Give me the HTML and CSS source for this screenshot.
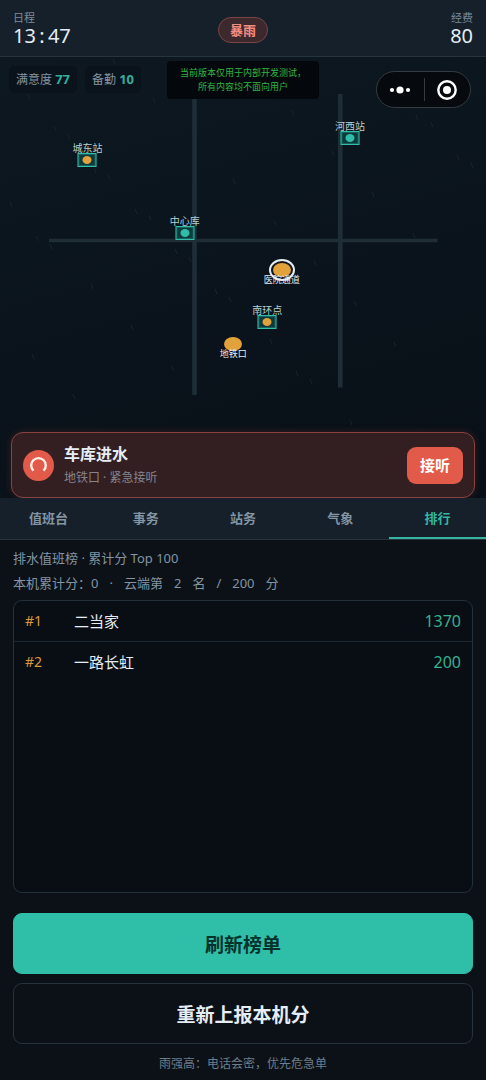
FILE: index.html
```html
<!DOCTYPE html>
<html lang="zh-CN">
<head>
<meta charset="UTF-8">
<meta name="viewport" content="width=device-width, initial-scale=1">
<title>排水值班</title>
<link rel="stylesheet" href="styles.css">
</head>
<body>

    <header class="topbar">
        <div class="stat">
            <span class="stat-label">日程</span>
            <span class="stat-value">13<span class="colon">:</span>47</span>
        </div>
        <span class="weather">暴雨</span>
        <div class="stat stat-right">
            <span class="stat-label">经费</span>
            <span class="stat-value">80</span>
        </div>
    </header>

    <section class="map">
        <svg class="map-bg" viewBox="0 57 486 441" preserveAspectRatio="none" aria-hidden="true">
            <g class="roads">
                <path d="M49 240.5H437.5" stroke-width="3.6"/>
                <path d="M194.5 94V395M340.3 94V387.5" stroke-width="4.6"/>
            </g>
            <!-- 雨滴 -->
            <path class="rain" d="M113 59l2 5M28 94l2 5M153 98l2 5M54 126l2 5M68 134l2 5M94 168l2 5M108 175l2 5M10 202l2 5M135 209l2 5M149 215l2 5M36 236l2 5M50 244l2 5M175 249l2 5M189 257l2 5M233 179l2 5M292 110l2 5M416 115l2 5M431 122l2 5M332 151l2 5M457 155l2 5M471 163l2 5M372 192l2 5M274 220l2 5M413 233l2 5M314 260l2 5M215 289l2 5M229 297l2 5M354 301l2 5M270 339l2 5M394 342l2 5M172 366l2 5M296 371l2 5M310 379l2 5M91 284l2 5M131 325l2 5M32 354l2 5M73 394l2 5M350 420l2 5"/>
        </svg>

        <div class="pin" style="left:18%;top:23.3%"><span class="pin-name">城东站</span><i class="station warn"></i></div>
        <div class="pin" style="left:72%;top:18.4%"><span class="pin-name">河西站</span><i class="station"></i></div>
        <div class="pin" style="left:38%;top:40%"><span class="pin-name">中心库</span><i class="station"></i></div>
        <div class="pin" style="left:55%;top:60%"><span class="pin-name">南环点</span><i class="station warn"></i></div>
        <div class="pin" style="left:58%;top:48.3%"><i class="event selected"></i><span class="event-name">医院通道</span></div>
        <div class="pin" style="left:48%;top:65%"><i class="event"></i><span class="event-name">地铁口</span></div>

        <div class="chips">
            <span class="chip">满意度 <b>77</b></span>
            <span class="chip">备勤 <b>10</b></span>
        </div>

        <p class="notice">当前版本仅用于内部开发测试，<br>所有内容均不面向用户</p>

        <div class="capsule">
            <button class="capsule-btn" aria-label="更多">
                <svg width="22" height="10" viewBox="0 0 22 10" fill="#fff"><circle cx="3" cy="5" r="2.1"/><circle cx="11" cy="5" r="3.6"/><circle cx="19" cy="5" r="2.1"/></svg>
            </button>
            <button class="capsule-btn" aria-label="关闭">
                <svg width="22" height="22" viewBox="0 0 22 22"><circle cx="11" cy="11" r="8.7" fill="none" stroke="#fff" stroke-width="2.4"/><circle cx="11" cy="11" r="4" fill="#fff"/></svg>
            </button>
        </div>

        <div class="alert">
            <svg class="alert-icon" viewBox="0 0 31 31" aria-hidden="true">
                <circle cx="15.5" cy="15.5" r="15.5" fill="#e25a49"/>
                <path d="M10.5 20.7A7.3 7.3 0 1 1 20.5 20.7" fill="none" stroke="#fff1e6" stroke-width="2.4"/>
            </svg>
            <div class="alert-text">
                <strong>车库进水</strong>
                <span>地铁口 · 紧急接听</span>
            </div>
            <button class="alert-btn">接听</button>
        </div>
    </section>

    <nav class="tabs">
        <button class="tab">值班台</button>
        <button class="tab">事务</button>
        <button class="tab">站务</button>
        <button class="tab">气象</button>
        <button class="tab active">排行</button>
    </nav>

    <main class="panel">
        <p class="line">排水值班榜 · 累计分 Top 100</p>
        <p class="line summary"><span>本机累计分：0</span> <span>·</span> <span>云端第</span> <span>2</span> <span>名</span> <span>/</span> <span>200</span> <span>分</span></p>

        <div class="board">
            <table class="rank">
                <tr>
                    <td class="no">#1</td>
                    <td class="name">二当家</td>
                    <td class="score">1370</td>
                </tr>
                <tr>
                    <td class="no">#2</td>
                    <td class="name">一路长虹</td>
                    <td class="score">200</td>
                </tr>
            </table>
        </div>

        <div class="actions">
            <button class="btn primary">刷新榜单</button>
            <button class="btn">重新上报本机分</button>
        </div>
        <p class="tip">雨强高：电话会密，优先危急单</p>
    </main>

</body>
</html>
```
FILE: styles.css
```css
*{
    margin: 0;
    padding: 0;
    box-sizing: border-box;
}

body{
    min-height: 100vh;
    display: flex;
    flex-direction: column;
    background: #0b1117;
    color: #e6edf5;
    font-family: "Noto Sans", "Noto Sans CJK SC", sans-serif;
}

button{
    font-family: inherit;
    border: none;
    background: none;
    color: inherit;
    cursor: pointer;
}

/* 顶栏 */
.topbar{
    height: 57px;
    padding: 0 13px;
    display: flex;
    align-items: center;
    justify-content: space-between;
    background: #15202a;
    border-bottom: 1px solid #26343d;
}

.stat{
    flex: 1;
    display: flex;
    flex-direction: column;
}

.stat-right{
    align-items: flex-end;
}

.stat-label{
    font-size: 11px;
    line-height: 14px;
    color: #7c8b99;
}

.stat-value{
    font-size: 20px;
    line-height: 21px;
}

.colon{
    display: inline-block;
    width: 12px;
    text-align: center;
}

.weather{
    padding: 0 11px;
    border: 1px solid #7d4444;
    border-radius: 13px;
    background: #3c292e;
    color: #f58d80;
    font-size: 13px;
    line-height: 24px;
    font-weight: bold;
    margin-top: 3px;
}

/* 地图 */
.map{
    position: relative;
    min-height: 441px;
    padding: 9px 11px 0 9px;
    display: flex;
    flex-direction: column;
    justify-content: space-between;
    background: linear-gradient(165deg, #0d1821 0%, #0a131b 60%, #080f17 100%);
}

.map-bg{
    position: absolute;
    top: 0;
    left: 0;
    width: 100%;
    height: 100%;
}

.roads{
    stroke: #1f2d37;
}

.rain{
    fill: none;
    stroke: #18242d;
    stroke-width: 1;
}

.pin{
    position: absolute;
    width: 0;
    height: 0;
}

.pin i{
    position: absolute;
    transform: translate(-50%, -50%);
}

.station{
    width: 19px;
    height: 14px;
    border: 1px solid #2fbfa8;
    outline: 1px solid rgba(47, 191, 168, 0.3);
    outline-offset: -2px;
    background: #0f3a3d;
}

.station::after{
    content: "";
    position: absolute;
    top: 2px;
    left: 4px;
    width: 9px;
    height: 8px;
    border-radius: 50%;
    background: #2fbfa8;
}

.station.warn::after{
    background: #e2a23b;
}

.event{
    width: 18px;
    height: 14px;
    border-radius: 50%;
    background: #e2a23b;
}

.event.selected{
    box-shadow: 0 0 0 2px #14171b, 0 0 0 4px #e6edf5;
}

.pin-name,
.event-name{
    position: absolute;
    transform: translateX(-50%);
    white-space: nowrap;
    line-height: 10px;
}

.pin-name{
    bottom: 7px;
    font-size: 10px;
    color: #b4d2d0;
}

.event-name{
    top: 5px;
    font-size: 9px;
    color: #e6edf5;
}

.chips{
    position: relative;
    display: flex;
    gap: 8px;
}

.chip{
    padding: 0 7px;
    border-radius: 5px;
    background: #0a131b;
    color: #8595a3;
    font-size: 12px;
    line-height: 26px;
}

.chip b{
    color: #35ad9b;
    font-size: 13px;
}

.notice{
    position: absolute;
    top: 4px;
    left: 50%;
    transform: translateX(-50%);
    padding: 5px 13px;
    border-radius: 4px;
    background: #04080c;
    color: #2fb543;
    font-size: 9px;
    line-height: 14px;
    text-align: center;
    white-space: nowrap;
}

.capsule{
    position: absolute;
    top: 14px;
    right: 15px;
    width: 95px;
    height: 37px;
    display: flex;
    border: 1px solid #353b41;
    border-radius: 19px;
    background: #060a0f;
}

.capsule-btn{
    flex: 1;
    display: flex;
    align-items: center;
    justify-content: center;
    position: relative;
}

.capsule-btn + .capsule-btn::before{
    content: "";
    position: absolute;
    left: 0;
    top: 6px;
    bottom: 6px;
    width: 1px;
    background: #353b41;
}

.alert{
    position: relative;
    margin-left: 2px;
    padding: 11px;
    display: flex;
    align-items: center;
    gap: 10px;
    border: 1px solid #8a4240;
    border-radius: 12px;
    background: #331f22;
    box-shadow: 0 0 8px rgba(226, 90, 73, 0.18);
}

.alert-icon{
    width: 31px;
    height: 31px;
}

.alert-text{
    flex: 1;
    display: flex;
    flex-direction: column;
}

.alert-text strong{
    font-size: 16px;
    line-height: 20px;
}

.alert-text span{
    margin-top: 6px;
    font-size: 12px;
    line-height: 16px;
    color: #86848f;
}

.alert-btn{
    padding: 0 13px;
    border-radius: 9px;
    background: #e25a49;
    color: #fff;
    font-size: 15px;
    line-height: 37px;
    font-weight: bold;
}

/* 标签栏 */
.tabs{
    position: relative;
    display: flex;
    height: 42px;
    background: #15202a;
    border-bottom: 1px solid #26343d;
}

.tab{
    flex: 1;
    border-bottom: 2px solid transparent;
    color: #8394a3;
    font-size: 13px;
    font-weight: bold;
}

.tab.active{
    color: #35b5a1;
    border-bottom-color: #35b5a1;
}

/* 排行 */
.panel{
    flex: 1;
    display: flex;
    flex-direction: column;
    padding: 8px 13px 6px;
}

.line{
    font-size: 13px;
    line-height: 20px;
    color: #8394a3;
}

.summary{
    display: flex;
    gap: 11px;
    margin: 5px 0 7px;
}

.board{
    flex: 1;
    border: 1px solid #233039;
    border-radius: 9px;
    background: #090e14;
}

.rank{
    width: 100%;
    border-collapse: collapse;
}

.rank td{
    height: 41px;
}

.rank tr:first-child td{
    height: 40px;
    border-bottom: 1px solid #1c2932;
}

.rank .no{
    width: 60px;
    padding-left: 11px;
    color: #d9993a;
    font-size: 14px;
}

.rank .name{
    font-size: 15px;
}

.rank .score{
    padding-right: 11px;
    text-align: right;
    color: #35b090;
    font-size: 16px;
}

.actions{
    display: flex;
    flex-direction: column;
    gap: 9px;
    margin-top: 20px;
}

.btn{
    height: 61px;
    border: 1px solid #26323c;
    border-radius: 9px;
    font-size: 19px;
    font-weight: bold;
}

.btn.primary{
    background: #2fbfa8;
    border-color: #2fbfa8;
    color: #06322c;
}

.tip{
    margin-top: 10px;
    text-align: center;
    font-size: 12px;
    line-height: 20px;
    color: #6e7d8a;
}
```
